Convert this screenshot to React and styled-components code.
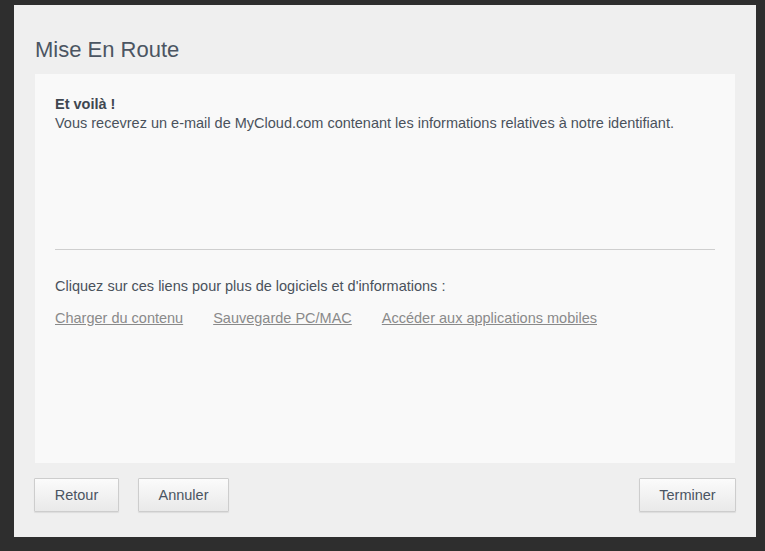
import React from 'react'
import styled, { createGlobalStyle } from 'styled-components'

const GlobalStyle = createGlobalStyle`
  html, body {
    margin: 0;
    padding: 0;
    background: #2e2e2e;
  }
  body {
    font-family: "Liberation Sans", Arial, sans-serif;
  }
`

const Screen = styled.div`
  width: 765px;
  height: 551px;
  box-sizing: border-box;
  padding: 5px 9px 14px 14px;
`

const Dialog = styled.div`
  height: 532px;
  background: #efefef;
  display: flex;
  flex-direction: column;
  padding: 0 21px;
`

const Title = styled.h1`
  margin: 33px 0 12px;
  font-size: 22px;
  line-height: 24px;
  font-weight: normal;
  color: #4b5562;
`

const Panel = styled.div`
  height: 389px;
  box-sizing: border-box;
  background: #f9f9f9;
  padding: 21px 20px 0;
  font-size: 14.5px;
  line-height: 19px;
  color: #4a525c;
`

const Heading = styled.div`
  font-weight: bold;
  color: #3f4750;
`

const Intro = styled.div`
  height: 154px;
`

const Separator = styled.hr`
  margin: 0;
  border: 0;
  border-top: 1px solid #cfcfcf;
`

const Prompt = styled.p`
  margin: 27px 0 13px;
`

const Links = styled.div`
  display: flex;
  gap: 30px;
`

const ExtLink = styled.a`
  color: #8a8a8a;
  text-decoration: underline;
  cursor: pointer;
`

const Footer = styled.div`
  display: flex;
  gap: 19px;
  padding-top: 15px;
  margin-left: -1px;
  margin-right: -1px;
`

const Button = styled.button`
  height: 34px;
  min-width: ${p => p.$width}px;
  padding: 0 18px;
  font-family: "Liberation Sans", Arial, sans-serif;
  font-size: 14.5px;
  color: #4b5562;
  border: 1px solid #cdcdcd;
  border-radius: 1px;
  background: linear-gradient(#fbfbfb, #e9e9e9);
  box-shadow: 0 1px 1px rgba(0, 0, 0, 0.08);
  cursor: pointer;
  margin-left: ${p => (p.$push ? 'auto' : '0')};
`

const App = () => {
  return (
    <Screen>
      <GlobalStyle />
      <Dialog>
        <Title>Mise En Route</Title>
        <Panel>
          <Intro>
            <Heading>Et voilà !</Heading>
            <div>Vous recevrez un e-mail de MyCloud.com contenant les informations relatives à notre identifiant.</div>
          </Intro>
          <Separator />
          <Prompt>Cliquez sur ces liens pour plus de logiciels et d'informations :</Prompt>
          <Links>
            <ExtLink>Charger du contenu</ExtLink>
            <ExtLink>Sauvegarde PC/MAC</ExtLink>
            <ExtLink>Accéder aux applications mobiles</ExtLink>
          </Links>
        </Panel>
        <Footer>
          <Button $width={85}>Retour</Button>
          <Button $width={91}>Annuler</Button>
          <Button $width={97} $push>Terminer</Button>
        </Footer>
      </Dialog>
    </Screen>
  )
}

export default App
